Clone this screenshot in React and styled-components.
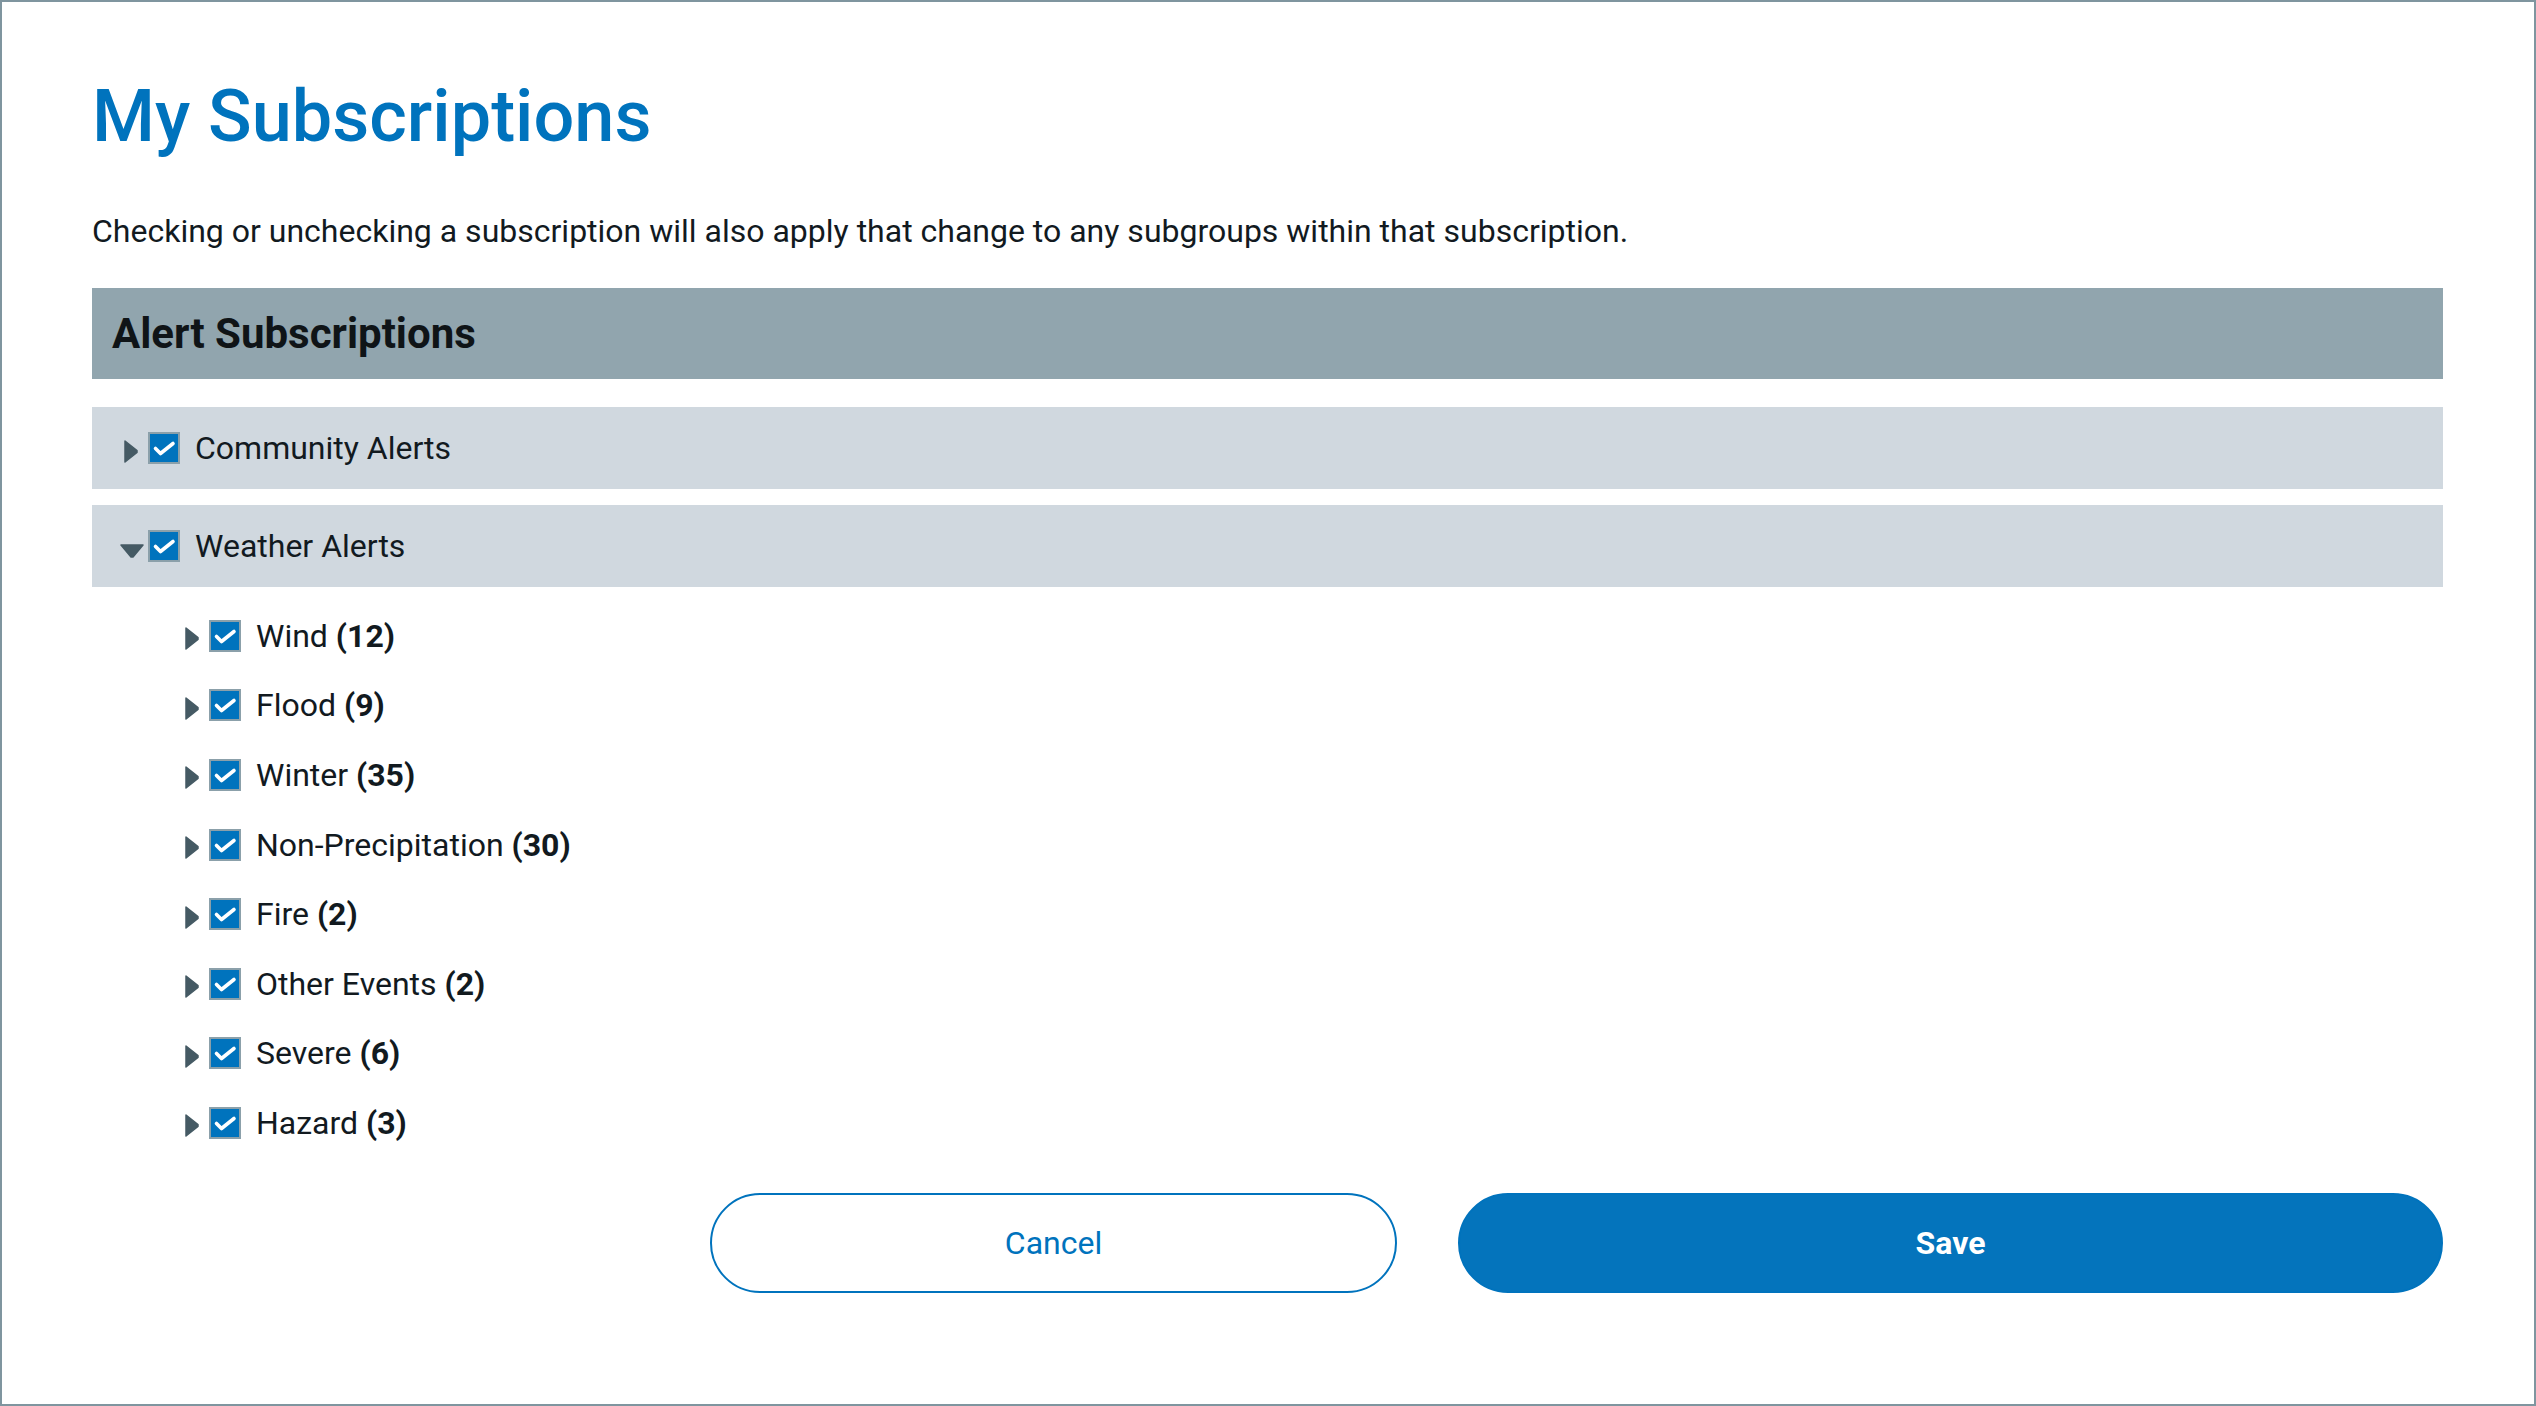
import React from "react";
import styled, { createGlobalStyle } from "styled-components";

const GlobalStyle = createGlobalStyle`
  html, body {
    margin: 0;
    padding: 0;
    background: #ffffff;
  }
  body {
    font-family: Roboto, "Liberation Sans", Arial, sans-serif;
    color: #121a1f;
  }
`;

const Frame = styled.div`
  box-sizing: border-box;
  width: 100%;
  height: 1406px;
  border: 2px solid #7f959f;
  padding: 0 91px 0 90px;
  display: flex;
  flex-direction: column;
`;

const Title = styled.h1`
  margin: 79px 0 0;
  font-size: 72px;
  line-height: 1;
  font-weight: 500;
  color: #0073bd;
`;

const Intro = styled.p`
  margin: 62px 0 0;
  font-size: 32px;
  line-height: 1;
  font-weight: 400;
`;

const SectionBar = styled.div`
  margin-top: 41px;
  height: 91px;
  background: #91a5ae;
  display: flex;
  align-items: center;
  padding-left: 20px;
  font-size: 42px;
  font-weight: 700;
  color: #0f1417;
`;

const Group = styled.div`
  display: flex;
  flex-direction: column;
  margin-top: ${(p) => p.$top}px;
`;

const GroupHeader = styled.div`
  height: 82px;
  background: #d0d8df;
  display: flex;
  align-items: center;
  padding-left: 32px;
`;

const SubList = styled.div`
  display: flex;
  flex-direction: column;
  margin-top: 14px;
`;

const SubRow = styled.div`
  height: 69.6px;
  display: flex;
  align-items: center;
  padding-left: 93px;
`;

const Caret = styled.span`
  display: inline-flex;
  width: 24px;
  justify-content: ${(p) => (p.$open ? "center" : "flex-start")};
  margin-top: ${(p) => (p.$open ? 9 : 6)}px;
  margin-left: ${(p) => (p.$open ? -4 : 0)}px;
  margin-right: ${(p) => (p.$open ? -8 : -12)}px;
  color: #455a64;
`;

const Box = styled.span`
  box-sizing: border-box;
  width: 32px;
  height: 32px;
  margin-left: 12px;
  border: 2px solid #8ba0aa;
  background: #0073bd;
  display: inline-flex;
  align-items: center;
  justify-content: center;
  flex-shrink: 0;
`;

const Label = styled.span`
  margin-left: 15px;
  font-size: 32px;
  line-height: 1;
  color: #121a1f;

  b {
    font-weight: 700;
  }
`;

const Actions = styled.div`
  margin-top: 35px;
  display: flex;
  justify-content: flex-end;
  gap: 61px;
`;

const Button = styled.button`
  box-sizing: border-box;
  width: ${(p) => p.$w}px;
  height: 100px;
  border-radius: 50px;
  border: 2px solid #0073bd;
  background: ${(p) => (p.$primary ? "#0474bc" : "#ffffff")};
  color: ${(p) => (p.$primary ? "#ffffff" : "#0073bd")};
  font-family: Roboto, "Liberation Sans", Arial, sans-serif;
  font-size: 32px;
  font-weight: ${(p) => (p.$primary ? 700 : 400)};
  cursor: pointer;
`;

function CaretIcon({ open }) {
  return (
    <Caret $open={open}>
      {open ? (
        <svg width="24" height="14" viewBox="0 0 24 14">
          <path d="M1 1 H23 L13 13 H11 Z" fill="currentColor" strokeLinejoin="round" stroke="currentColor" strokeWidth="1.5" />
        </svg>
      ) : (
        <svg width="14" height="23" viewBox="0 0 14 23">
          <path d="M1 1 L13 10.5 V12.5 L1 22 Z" fill="currentColor" strokeLinejoin="round" stroke="currentColor" strokeWidth="1.5" />
        </svg>
      )}
    </Caret>
  );
}

function Check() {
  return (
    <Box>
      <svg width="28" height="28" viewBox="0 0 28 28">
        <path
          d="M5.5 14.5 L10.5 19.5 L23 9.5"
          fill="none"
          stroke="#ffffff"
          strokeWidth="3.6"
          strokeLinecap="round"
          strokeLinejoin="round"
        />
      </svg>
    </Box>
  );
}

const weather = [
  ["Wind", 12],
  ["Flood", 9],
  ["Winter", 35],
  ["Non-Precipitation", 30],
  ["Fire", 2],
  ["Other Events", 2],
  ["Severe", 6],
  ["Hazard", 3],
];

export default function App() {
  return (
    <>
      <GlobalStyle />
      <Frame>
        <Title>My Subscriptions</Title>
        <Intro>
          Checking or unchecking a subscription will also apply that change to any subgroups within that subscription.
        </Intro>
        <SectionBar>Alert Subscriptions</SectionBar>

        <Group $top={28}>
          <GroupHeader>
            <CaretIcon />
            <Check />
            <Label>Community Alerts</Label>
          </GroupHeader>
        </Group>

        <Group $top={16}>
          <GroupHeader>
            <CaretIcon open />
            <Check />
            <Label>Weather Alerts</Label>
          </GroupHeader>
          <SubList>
            {weather.map(([name, count]) => (
              <SubRow key={name}>
                <CaretIcon />
                <Check />
                <Label>
                  {name} <b>({count})</b>
                </Label>
              </SubRow>
            ))}
          </SubList>
        </Group>

        <Actions>
          <Button $w={687}>Cancel</Button>
          <Button $w={985} $primary>
            Save
          </Button>
        </Actions>
      </Frame>
    </>
  );
}
